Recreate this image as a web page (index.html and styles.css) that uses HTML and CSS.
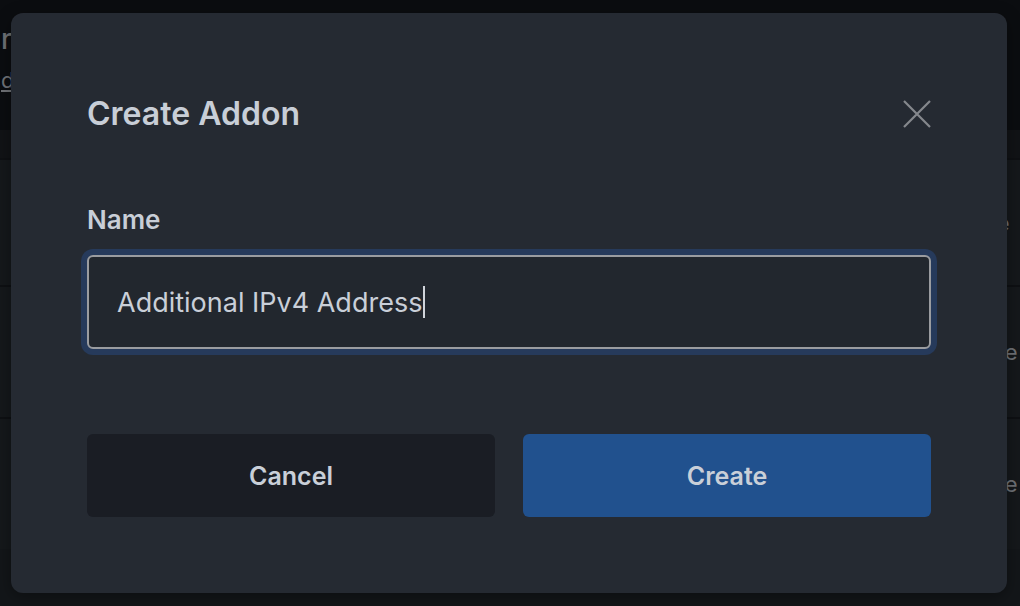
FILE: index.html
```html
<!DOCTYPE html>
<html lang="en">
<head>
<meta charset="utf-8">
<title>Create Addon</title>
<link rel="stylesheet" href="styles.css">
</head>
<body>
<div class="page">
  <header class="page-head">
    <h1 class="page-title">rv</h1>
    <a class="page-link" href="#">d</a>
  </header>
  <div class="page-band"></div>
  <div class="table">
    <div class="row row-head"><span class="cell">Type</span></div>
    <div class="row"><span class="cell">None</span></div>
    <div class="row"><span class="cell">None</span></div>
  </div>
</div>

<div class="overlay">
  <div class="modal" role="dialog" aria-labelledby="modal-title">
    <div class="modal-head">
      <h2 class="modal-title" id="modal-title">Create Addon</h2>
      <button class="close" aria-label="Close">
        <svg width="28" height="28" viewBox="0 0 28 28" aria-hidden="true">
          <path d="M1 1 L27 27 M27 1 L1 27" stroke="#85888d" stroke-width="2.2" fill="none" stroke-linecap="butt"/>
        </svg>
      </button>
    </div>
    <label class="field-label">Name</label>
    <div class="field-ring">
      <div class="field">Additional IPv4 Address<span class="caret"></span></div>
    </div>
    <div class="actions">
      <button class="btn btn-cancel">Cancel</button>
      <button class="btn btn-create">Create</button>
    </div>
  </div>
</div>
</body>
</html>
```

FILE: styles.css
```css
* { box-sizing: border-box; }
html, body { margin: 0; padding: 0; }
body {
  width: 1020px;
  height: 606px;
  overflow: hidden;
  background: #131619;
  font-family: Inter, "Noto Sans", sans-serif;
  position: relative;
}

/* background page */
.page-head {
  height: 130px;
  background: #0b0d10;
  padding: 22px 0 0 1px;
}
.page-title {
  margin: 0;
  font-size: 28px;
  line-height: 34px;
  font-weight: 500;
  color: #6f7276;
  white-space: nowrap;
}
.page-link {
  display: inline-block;
  margin-top: 10px;
  font-size: 22px;
  line-height: 28px;
  color: #707377;
  text-decoration: underline;
}
.page-band {
  height: 28px;
  background: #111316;
}
.row {
  height: 132px;
  background: #15181b;
  border-top: 2px solid #0e1013;
  display: flex;
  align-items: center;
  justify-content: flex-end;
}
.row-head { height: 127px; }
.cell {
  width: 58px;
  font-size: 22px;
  color: #6e7176;
  white-space: nowrap;
}
.row-head .cell { width: 62px; }

/* overlay + modal */
.overlay {
  position: absolute;
  inset: 0;
  padding: 13px 13px 13px 11px;
}
.modal {
  width: 996px;
  height: 580px;
  background: #252a32;
  border-radius: 12px;
  padding: 81px 76px 76px 76px;
  display: flex;
  flex-direction: column;
  box-shadow: 0 4px 16px rgba(0,0,0,0.35);
}
.modal-head {
  display: flex;
  align-items: center;
  justify-content: space-between;
  height: 40px;
}
.modal-title {
  margin: 0;
  font-size: 32px;
  line-height: 40px;
  font-weight: 600;
  color: #c8ced7;
}
.close {
  width: 28px;
  height: 28px;
  padding: 0;
  border: 0;
  background: none;
  display: flex;
}
.field-label {
  margin-top: 71px;
  font-size: 26px;
  line-height: 30px;
  font-weight: 600;
  color: #c8ced7;
}
.field-ring {
  margin: 14px -6px 0 -6px;
  padding: 6px;
  border-radius: 12px;
  background: #263a5b;
}
.field {
  height: 94px;
  border: 2px solid #9a9ca0;
  border-radius: 6px;
  background: #22272e;
  padding: 0 28px;
  display: flex;
  align-items: center;
  font-size: 27px;
  color: #c9cfd8;
  white-space: nowrap;
}
.caret {
  display: inline-block;
  width: 2px;
  height: 32px;
  background: #d0d4da;
  margin-left: 1px;
}
.actions {
  margin-top: 79px;
  display: flex;
  gap: 28px;
}
.btn {
  flex: 1;
  height: 83px;
  border: 0;
  border-radius: 6px;
  font-family: Inter, "Noto Sans", sans-serif;
  font-size: 25px;
  font-weight: 600;
  color: #c9cfd8;
}
.btn-cancel { background: #1a1d24; }
.btn-create { background: #21518e; }
```
